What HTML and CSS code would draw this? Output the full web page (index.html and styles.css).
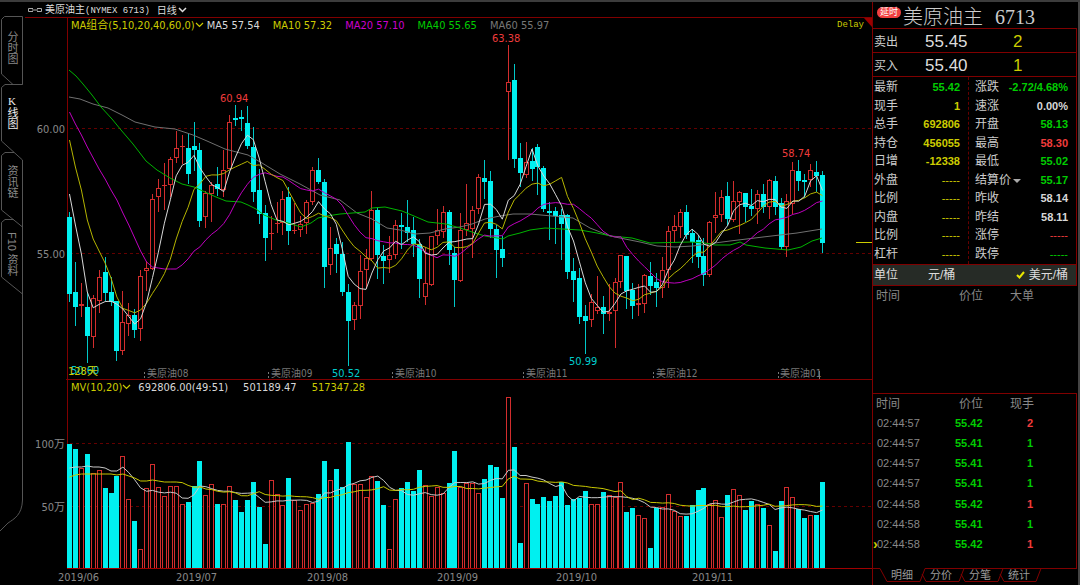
FILE: index.html
```html
<!DOCTYPE html>
<html lang="zh-CN">
<head>
<meta charset="utf-8">
<title>美原油主 6713 日线</title>
<link rel="stylesheet" href="styles.css">
</head>
<body>
<div class="app">
  <nav class="side">
    <svg class="side-lines" width="25" height="540" viewBox="0 0 25 540" aria-hidden="true">
      <path d="M4.500 14.500H22.500V82.500H13L1.500 72V17.500L4.500 14.500"/>
      <path d="M22.500 82.500H5L1.500 85.500V139L22.500 158V498C22 513 14 517 8 521L0 529"/>
      <path d="M14 150.500H5L1.500 153.500V208L22.500 225"/>
      <path d="M14 217.500H5L1.500 220.500V275L22.500 292"/>
    </svg>
    <button class="side-tab t1">分时图</button>
    <button class="side-tab t2 on">K线图</button>
    <button class="side-tab t3">资讯链</button>
    <button class="side-tab t4">F10 资料</button>
  </nav>

  <main class="main">
    <header class="title">
      <svg width="14" height="6" viewBox="0 0 14 6" aria-hidden="true"><path d="M5 1.500H.5V4.500H5M4 3H10M9 1.500H13.500V4.500H9" fill="none" stroke="#aaa"/></svg>
      <h1>美原油主<span class="code">(NYMEX 6713)</span></h1>
      <button class="period">日线<svg width="9" height="6" viewBox="0 0 9 6" aria-hidden="true"><path d="M1 1L4.500 4.500L8 1" fill="none" stroke="#ddd" stroke-width="1.500"/></svg></button>
    </header>

    <section class="pane">
      <div class="legend">
        <button class="ind">MA组合(5,10,20,40,60,0)<svg width="9" height="6" viewBox="0 0 9 6" aria-hidden="true"><path d="M1 1L4.500 4.500L8 1" fill="none" stroke="#cc0" stroke-width="1.200"/></svg></button>
        <span class="white">MA5 57.54</span>
        <span class="yellow">MA10 57.32</span>
        <span class="magenta">MA20 57.10</span>
        <span class="green">MA40 55.65</span>
        <span class="gray">MA60 55.97</span>
        <span class="delay">Delay</span>
        <svg class="corner" width="8" height="9" viewBox="0 0 8 9" aria-hidden="true"><path d="M0 0H8V9Z" fill="#900"/></svg>
      </div>
      <svg class="chart" viewBox="25 32 847 347" role="img" aria-label="日K线">
        <path class="axis" d="M67.500 32V379"/>
        <path class="grid" d="M70 128.500H872M70 253.500H872"/>
        <g class="scale"><text x="65" y="133">60.00</text><text x="65" y="258">55.00</text></g>
        <g class="contract">
          <text x="147" y="377">美原油08</text><text x="271" y="377">美原油09</text><text x="395" y="377">美原油10</text>
          <text x="526" y="377">美原油11</text><text x="656" y="377">美原油12</text><text x="780" y="377">美原油01</text>
          <path d="M144.500 372v7M268.500 372v7M392.500 372v7M523.500 372v7M653.500 372v7M778.500 372v7" stroke-dasharray="2 2"/>
          <path d="M819.500 371v8"/>
        </g>
        <g id="candles"></g>
        <g id="averages"></g>
        <g class="up-mark"><text x="220" y="102">60.94</text><text x="492" y="42">63.38</text><text x="782" y="157">58.74</text></g>
        <g class="down-mark"><text x="332" y="377">50.52</text><text x="569" y="365">50.99</text><text x="71" y="374">50.60</text></g>
        <text class="days" x="68" y="375">128天</text>
        <path d="M856 242.500H872" stroke="#cc0"/>
      </svg>
    </section>

    <section class="pane volume">
      <div class="legend">
        <button class="ind">MV(10,20)<svg width="9" height="6" viewBox="0 0 9 6" aria-hidden="true"><path d="M1 1L4.500 4.500L8 1" fill="none" stroke="#cc0" stroke-width="1.200"/></svg></button>
        <span class="white">692806.00(49:51)</span>
        <span class="white">501189.47</span>
        <span class="yellow">517347.28</span>
      </div>
      <svg class="chart" viewBox="25 394 847 191" role="img" aria-label="成交量">
        <path class="axis" d="M67.500 394V568"/>
        <path class="grid" d="M70 443.500H872M70 506.500H872"/>
        <g class="scale"><text x="65" y="448">100万</text><text x="65" y="511">50万</text></g>
        <g id="volumes"></g>
        <g id="volume-averages"></g>
        <path class="axis bright" d="M67 568.500H872"/>
        <g class="dates">
          <text x="58" y="581">2019/06</text><text x="176" y="581">2019/07</text><text x="307" y="581">2019/08</text>
          <text x="437" y="581">2019/09</text><text x="556" y="581">2019/10</text><text x="692" y="581">2019/11</text>
        </g>
      </svg>
    </section>
  </main>

  <aside class="quote">
    <header class="name"><span class="badge">延时</span><h2>美原油主<span class="num">6713</span></h2></header>
    <div class="bid"><span>卖出</span><b>55.45</b><i>2</i></div>
    <div class="bid"><span>买入</span><b>55.40</b><i>1</i></div>
    <div class="stats">
      <dl>
        <div><dt>最新</dt><dd class="green">55.42</dd></div>
        <div><dt>现手</dt><dd class="yellow">1</dd></div>
        <div><dt>总手</dt><dd class="yellow">692806</dd></div>
        <div><dt>持仓</dt><dd class="yellow">456055</dd></div>
        <div><dt>日增</dt><dd class="yellow">-12338</dd></div>
        <div><dt>外盘</dt><dd class="yellow dash">-----</dd></div>
        <div><dt>比例</dt><dd class="yellow dash">-----</dd></div>
        <div><dt>内盘</dt><dd class="yellow dash">-----</dd></div>
        <div><dt>比例</dt><dd class="yellow dash">-----</dd></div>
        <div><dt>杠杆</dt><dd class="yellow dash">-----</dd></div>
      </dl>
      <dl>
        <div><dt>涨跌</dt><dd class="green">-2.72/4.68%</dd></div>
        <div><dt>速涨</dt><dd class="white">0.00%</dd></div>
        <div><dt>开盘</dt><dd class="green">58.13</dd></div>
        <div><dt>最高</dt><dd class="red">58.30</dd></div>
        <div><dt>最低</dt><dd class="green">55.02</dd></div>
        <div><dt>结算价<svg width="8" height="5" viewBox="0 0 8 5" aria-hidden="true"><path d="M0 0H8L4 4Z" fill="#aaa"/></svg></dt><dd class="green">55.17</dd></div>
        <div><dt>昨收</dt><dd class="white">58.14</dd></div>
        <div><dt>昨结</dt><dd class="white">58.11</dd></div>
        <div><dt>涨停</dt><dd class="red dash">-----</dd></div>
        <div><dt>跌停</dt><dd class="green dash">-----</dd></div>
      </dl>
    </div>
    <div class="unit">
      <span>单位</span><button>元/桶</button>
      <button class="picked"><svg width="9" height="8" viewBox="0 0 9 8" aria-hidden="true"><path d="M1 4L3.500 6.500L8 1" fill="none" stroke="#e6e600" stroke-width="2"/></svg>美元/桶</button>
    </div>
    <table class="ticks big">
      <thead><tr><th>时间</th><th>价位</th><th>大单</th></tr></thead>
    </table>
    <div class="tick-box">
      <table class="ticks">
        <thead><tr><th>时间</th><th>价位</th><th>现手</th></tr></thead>
        <tbody>
          <tr><td>02:44:57</td><td>55.42</td><td class="red">2</td></tr>
          <tr><td>02:44:57</td><td>55.41</td><td>1</td></tr>
          <tr><td>02:44:57</td><td>55.41</td><td>1</td></tr>
          <tr><td>02:44:57</td><td>55.41</td><td>1</td></tr>
          <tr><td>02:44:58</td><td>55.42</td><td class="red">1</td></tr>
          <tr><td>02:44:58</td><td>55.41</td><td>1</td></tr>
          <tr class="current"><td>02:44:58</td><td>55.42</td><td class="red">1</td></tr>
        </tbody>
      </table>
    </div>
    <nav class="tabs">
      <svg class="tab-lines" width="204" height="15" viewBox="0 0 204 15" aria-hidden="true">
        <path d="M0 .5H7L14 13.500H47L52 .5H204M49 6L53 13.500H86L91 .5M88 6L92 13.500H125L130 .5M127 6L131 13.500H163L168 .5"/>
      </svg>
      <button>明细</button><button>分价</button><button>分笔</button><button>统计</button>
    </nav>
  </aside>
</div>
<script src="chart.js"></script>
</body>
</html>
```
FILE: styles.css
```css
* { box-sizing: border-box; }
body {
  margin: 0;
  background: #000;
  color: #ccc;
  font: 11px/14px "DejaVu Sans Condensed", "DejaVu Sans", "Noto Sans CJK SC", sans-serif;
  font-stretch: condensed;
}
button {
  margin: 0;
  padding: 0;
  border: 0;
  background: none;
  color: inherit;
  font: inherit;
}
h1, h2, dl, dd { margin: 0; font-weight: 400; }
.app {
  display: flex;
  min-height: 100vh;
  border-top: 2px solid #3c3c3c;
}
.white { color: #d8d8d8; }
.yellow { color: #cc0; }
.magenta { color: #c0c; }
.green { color: #0c0; }
.gray { color: #777; }
.red { color: #f03c3c; }

/* left tabs */
.side {
  position: relative;
  flex: 0 0 25px;
  display: flex;
  flex-direction: column;
  padding-top: 14px;
}
.side-lines { position: absolute; left: 0; top: 0; fill: none; stroke: #555; }
.side-tab {
  position: relative;
  width: 24px;
  height: 67px;
  padding-top: 15px;
  text-align: left;
  color: #888;
  font: 11px/24px "Liberation Sans", "Noto Sans CJK SC", sans-serif;
  writing-mode: vertical-rl;
}
.side-tab.t2 { padding-top: 12px; }
.side-tab.t4 { height: 75px; }
.side-tab.on {
  color: #eee;
  font-family: "Liberation Serif", "Noto Sans CJK SC", serif;
  text-orientation: upright;
}

/* charts */
.main { flex: 1; min-width: 0; }
.title {
  display: flex;
  align-items: center;
  height: 15px;
  padding-left: 3px;
  gap: 3px;
  color: #ddd;
  font: 10px/15px "Noto Sans CJK SC", sans-serif;
}
.title h1 { font-size: 10px; line-height: 15px; }
.code { font: 9px/15px "Liberation Mono", monospace; }
.period { display: flex; align-items: center; gap: 1px; margin-left: 4px; }
.pane { border-top: 1px solid #800000; }
.volume { border-image: linear-gradient(90deg, transparent 42px, #800000 42px) 1; }
.legend {
  position: relative;
  display: flex;
  gap: 13px;
  height: 14px;
  margin-left: 42px;
  padding-left: 3px;
  border-left: 1px solid #800000;
  line-height: 15px;
  white-space: nowrap;
}
.volume .legend { gap: 15px; }
.ind { display: flex; align-items: center; color: #cc0; }
.ind + span { margin-left: -10px; }
.volume .ind + span { margin-left: -8px; }
.delay {
  margin: 0 8px 0 auto;
  color: #cc0;
  font: 9px/15px "Liberation Mono", monospace;
}
.corner { position: absolute; right: 0; top: 0; }
.chart { display: block; width: 100%; }
.chart text { font-size: 11px; }
.axis { stroke: #800000; }
.axis.bright { stroke: #a00000; }
.grid { stroke: #640000; stroke-dasharray: 3 3; }
.scale text { fill: #888; text-anchor: end; }
.dates { fill: #888; }
.contract { fill: #777; stroke: none; }
.contract text { font-size: 10px; }
.contract path { stroke: #777; }
.up-mark { fill: #f03c3c; }
.down-mark { fill: #0cc; }
.days { fill: #cc0; }
.rise { fill: #000; stroke: #d22d2d; }
.fall { fill: #00f0f0; stroke: none; }
.fall-wick { stroke: #00c8c8; }
.line { fill: none; stroke-width: 1; }

/* quote panel */
.quote {
  flex: 0 0 208px;
  display: flex;
  flex-direction: column;
  border-right: 2px solid #444;
  border-left: 1px solid #800000;
  padding-right: 1px;
  color: #ccc;
  font: 12px/18px "Liberation Sans", "Noto Sans CJK SC", sans-serif;
}
.name { display: flex; height: 26px; padding-left: 4px; }
.badge {
  height: 11px;
  margin-top: 5px;
  padding: 0 3px;
  border-radius: 6px;
  background: #f04040;
  color: #fff;
  font-size: 9px;
  line-height: 11px;
}
.name h2 {
  margin-left: 2px;
  font: 300 20px/28px "Noto Sans CJK SC", sans-serif;
}
.num { margin-left: 12px; font: 20px/28px "Liberation Serif", serif; }
.bid {
  display: grid;
  grid-template-columns: 51px 88px 1fr;
  align-items: center;
  height: 24px;
  padding: 2px 0 0 1px;
  border-top: 1px solid #800000;
  border-right: 1px solid #800000;
}
.bid b, .bid i { color: #ddd; font: 17px/20px "Liberation Sans", sans-serif; }
.bid i { color: #cc0; }
.stats {
  display: grid;
  grid-template-columns: 95px 1fr;
  height: 188px;
  border-top: 1px solid #800000;
  border-right: 1px solid #800000;
}
.stats dl {
  display: grid;
  grid-auto-rows: 1fr;
  padding: 1px 8px 1px 1px;
}
.stats dl + dl { padding: 1px 8px 1px 6px; border-left: 1px dashed #640000; }
.stats dl > div { display: flex; justify-content: space-between; align-items: center; }
dt svg { margin-left: 2px; }
dd { font-size: 11px; font-weight: 700; }
dd.dash { font-weight: 400; }
.unit {
  display: flex;
  align-items: center;
  height: 22px;
  padding: 0 8px 0 1px;
  border: 1px solid #800000;
  border-left: 0;
  background: #262b26;
  color: #ddd;
}
.unit span { width: 54px; }
.picked { display: flex; align-items: center; gap: 4px; margin-left: auto; }
.ticks { width: 100%; border-collapse: collapse; table-layout: fixed; }
.ticks th { height: 19px; padding: 0; color: #888; font-weight: 400; text-align: left; }
.ticks th:first-child { width: 82px; padding-left: 3px; }
.ticks th:nth-child(2) { width: 50px; padding-left: 4px; }
.ticks th:nth-child(3) { padding-left: 5px; }
.ticks td { padding: 0; font-size: 11px; color: #888; }
.ticks td:first-child { padding-left: 4px; }
.ticks td:nth-child(2) { color: #0c0; font-weight: 700; }
.ticks td:nth-child(3) { padding-left: 22px; font-weight: 700; color: #0c0; }
.ticks td.red:nth-child(3) { color: #f03c3c; }
.big { height: 19px; }
.tick-box {
  margin-top: 88px;
  height: 175px;
  border-top: 1px solid #800000;
  border-right: 1px solid #800000;
}
.tick-box .ticks { height: 160px; }
.current td:first-child { position: relative; }
.current td:first-child::before {
  content: "›";
  position: absolute;
  left: 0;
  color: #cc0;
  font-size: 14px;
  font-weight: 700;
}
.tabs {
  position: relative;
  display: flex;
  gap: 17px;
  padding-left: 18px;
  color: #999;
  font-size: 11px;
  line-height: 15px;
}
.tab-lines { position: absolute; left: 0; top: 0; fill: none; stroke: #800000; }
.tabs button { position: relative; height: 15px; }
```
FILE: chart.js
```js
// One row per trading day: direction, high, body top, body bottom, low, volume top.
const rows = `
c 212 217 294 302 444;c 262 292 307 326 449;r 283 304 306 317 468;c 293 307 336 363 454;r 295 298 337 348 473
r 270 277 301 313 470;c 257 272 293 301 488;c 277 292 302 306 493;c 301 301 351 361 476;r 291 322 351 355 456
r 303 315 324 336 499;c 309 315 330 338 521;r 270 276 329 341 549;r 261 268 271 291 488;r 194 199 269 270 464
r 179 188 197 212 487;r 163 185 185 210 496;r 157 159 185 197 486;r 131 148 158 163 486;r 135 146 146 164 504
c 133 148 174 184 502;c 122 146 150 171 486;c 143 150 221 227 461;r 191 193 217 228 495;r 182 185 194 222 484
c 167 184 189 196 504;r 150 170 190 197 504;r 115 122 169 169 486;c 105 118 119 126 500;c 110 117 119 131 512
c 106 123 146 149 500;c 127 147 192 202 482;c 169 190 214 224 507;c 205 213 238 261 544;r 216 233 233 250 480
r 202 223 223 233 494;r 191 199 223 235 505;c 187 197 231 245 478;r 203 230 230 234 500;r 216 224 230 237 510
r 200 202 223 234 504;r 167 170 202 205 503;c 158 170 182 184 494;c 179 182 267 288 461;r 227 248 265 275 480
c 238 244 254 273 469;c 242 254 292 296 487;c 284 292 321 366 442;r 302 305 320 330 484;r 255 271 306 319 484
r 249 258 270 289 497;r 191 210 259 261 476;c 207 210 255 279 481;c 245 256 261 284 505;r 236 255 260 273 549
r 220 225 255 259 499;c 213 225 227 249 488;c 200 227 233 242 482;c 217 230 244 257 491;c 239 244 279 298 470
r 247 283 297 305 485;r 236 236 285 286 496;r 209 230 236 245 487;r 206 212 232 238 493;c 210 212 250 265 483
c 247 253 280 307 451;r 213 230 281 282 487;r 184 223 230 236 483;r 206 210 229 258 483;r 174 177 209 214 493
c 160 178 182 199 479;c 171 181 229 238 465;c 225 229 250 278 467;c 236 249 258 267 498;r 45 82 92 160 397
c 64 80 159 168 447;c 143 158 173 187 543;r 142 162 175 178 483;c 148 161 169 181 499;c 144 147 167 195 504
c 166 168 209 212 497;c 202 211 213 240 501;c 207 211 216 244 496;c 209 215 224 260 482;c 214 215 272 279 505
c 258 271 280 302 499;c 268 278 317 324 498;c 305 316 321 354 491;r 294 302 320 327 504;r 276 307 311 314 504
c 296 307 314 334 492;r 284 312 314 321 495;r 278 282 311 348 497;r 255 255 282 288 482;c 256 256 291 309 512
c 283 290 306 319 508;r 284 303 305 316 515;r 274 275 304 313 518;c 262 276 286 295 548;c 273 282 288 307 508
r 257 270 288 298 507;r 226 231 270 288 494;r 215 226 231 243 511;r 209 212 227 238 516;c 205 212 235 239 516
c 229 233 242 263 505;c 235 240 257 268 490;c 238 256 275 286 488;r 221 222 275 277 504;r 192 215 218 233 500
r 190 197 215 222 517;c 182 196 219 226 495;r 181 201 220 222 489;r 191 192 202 234 495;c 193 193 207 222 510
c 189 206 209 216 501;r 190 194 209 224 504;c 184 194 207 213 508;r 179 180 207 219 525;c 176 181 207 215 551
c 198 203 247 250 501;r 194 201 247 257 487;r 162 170 204 214 497;c 160 171 181 191 509;c 174 180 182 198 518
r 164 170 180 187 515;c 161 172 176 192 515;c 171 175 243 253 482`
  .trim().split(/[;\n]/).map(r => {
    const [dir, ...n] = r.split(" ");
    const [high, top, bottom, low, vol] = n.map(Number);
    return { dir, high, top, bottom, low, vol, close: dir === "c" ? bottom : top };
  });

const FIRST = 69.5, STEP = 753 / 127, BASE = 568;
const xAt = i => +(FIRST + STEP * i).toFixed(1);
// Candles and bars sit on whole pixels so that their edges stay crisp.
const snap = i => Math.floor(xAt(i)) + 0.5;

let candles = "", volumes = "";
rows.forEach((d, i) => {
  const x = snap(i);
  const h = d.bottom - d.top;
  if (d.dir === "c") {
    candles += `<path class="fall-wick" d="M${x} ${d.high}V${d.low}"/><rect class="fall" x="${x - 2.5}" y="${d.top}" width="5" height="${Math.max(h, 2)}"/>`;
    volumes += `<rect class="fall" x="${x - 2.5}" y="${d.vol}" width="5" height="${BASE - d.vol}"/>`;
  } else {
    candles += `<path class="rise" d="M${x} ${d.high}V${d.low}"/>`;
    candles += h < 2
      ? `<path class="rise" d="M${x - 2.5} ${d.top + 0.5}h5"/>`
      : `<rect class="rise" x="${x - 2}" y="${d.top + 0.5}" width="4" height="${h - 1}"/>`;
    volumes += `<rect class="rise" x="${x - 2}" y="${d.vol + 0.5}" width="4" height="${BASE - d.vol}"/>`;
  }
});

// Moving average; seed holds the values before enough days are on screen.
const average = (key, n, seed) => rows.map((_, i) =>
  i < n - 1 ? seed[i] : rows.slice(i - n + 1, i + 1).reduce((s, d) => s + d[key], 0) / n);
const line = (points, color) =>
  `<polyline class="line" stroke="${color}" points="${points}"/>`;
const series = (values, color) =>
  line(values.map((v, i) => `${xAt(i)},${v.toFixed(1)}`).join(" "), color);

const ma40 = "69,70 76,76 83,84 92,95 101,107 112,119 121,130 133,144 146,161 157,170 170,178 182,184 194,187 205,192 216,197 226,201 241,202 248,205 256,209 264,215 276,220 288,223 301,227 311,223 318,218 327,216 340,214 365,212 372,208 385,207 402,211 414,216 428,222 446,224 460,228 475,233 485,236 503,239 508,236 520,233 530,230 545,228 580,230 597,233 611,236 632,238 650,243 690,242 705,243 715,245 730,245 740,242 746,245 765,248 788,250 801,247 812,241 822,238";
const ma60 = "69,97 80,99 93,104 108,108 122,115 135,122 155,127 175,129 193,135 207,141 225,149 248,155 262,163 280,174 300,184 320,195 340,200 357,213 372,219 387,228 400,230 415,234 430,233 445,229 460,227 472,224 485,219 500,216 513,214 530,214 552,216 573,218 590,228 610,236 640,242 657,246 675,247 693,246 707,244 730,241 763,237 797,233 822,229";

document.getElementById("candles").innerHTML = candles;
document.getElementById("volumes").innerHTML = volumes;
document.getElementById("averages").innerHTML =
  line(ma60, "#707070") + line(ma40, "#00b400") +
  series(average("close", 20, [112, 124, 135, 147, 158, 169, 179, 190, 200, 213, 225, 238, 251, 262, 267, 268, 269, 269, 269]), "#c000c0") +
  series(average("close", 10, [140, 167, 190, 220, 239, 251, 263, 278, 297]), "#b4b400") +
  series(average("close", 5, [194, 225, 254, 292]), "#d8d8d8");
document.getElementById("volume-averages").innerHTML =
  series(average("vol", 10, [468, 467, 467, 466, 467, 467, 468, 471, 471]), "#c8c8c8") +
  series(average("vol", 20, [477, 475, 474, 474, 474, 474, 474, 474, 475, 474, 476, 478, 481, 481, 480, 481, 482, 482, 482]), "#c8c800");
```
